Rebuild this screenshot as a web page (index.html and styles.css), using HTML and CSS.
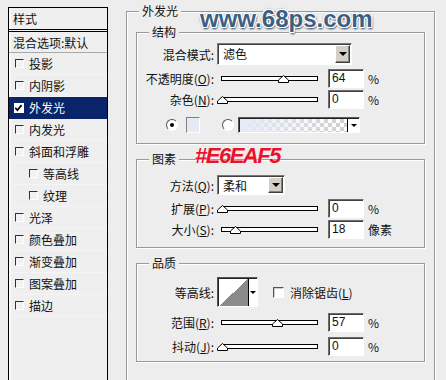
FILE: index.html
```html
<!DOCTYPE html>
<html lang="zh-CN">
<head>
  <meta charset="UTF-8" />
  <title>图层样式 - 外发光</title>
  <link rel="stylesheet" href="styles.css">
</head>
<body>
  <div class="dialog">

    <!-- 样式列表 -->
    <div class="styles-panel">
      <div class="panel-title">样式</div>
      <ul class="style-list">
        <li class="blend">混合选项:默认</li>
        <li><span class="check"></span>投影</li>
        <li><span class="check"></span>内阴影</li>
        <li class="active">
          <span class="check on">
            <svg width="9" height="9" viewBox="0 0 9 9"><polyline points="1.2,4.2 3.4,6.6 7.6,1.6" fill="none" stroke="#000" stroke-width="1.7"/></svg>
          </span>外发光
        </li>
        <li><span class="check"></span>内发光</li>
        <li><span class="check"></span>斜面和浮雕</li>
        <li class="sub"><span class="check"></span>等高线</li>
        <li class="sub"><span class="check"></span>纹理</li>
        <li><span class="check"></span>光泽</li>
        <li><span class="check"></span>颜色叠加</li>
        <li><span class="check"></span>渐变叠加</li>
        <li><span class="check"></span>图案叠加</li>
        <li><span class="check"></span>描边</li>
      </ul>
    </div>

    <!-- 外发光设置 -->
    <div class="settings">
      <div class="group group-outer">
        <span class="legend">外发光</span>

        <div class="group group-inner structure">
          <span class="legend">结构</span>
          <div class="row row-select">
            <span class="label">混合模式:</span>
            <div class="select select-wide"><span class="select-text">滤色</span><span class="select-btn"><i class="arrow"></i></span></div>
          </div>
          <div class="row row-first">
            <span class="label">不透明度(<u>O</u>):</span>
            <div class="slider"><span class="track"></span><svg class="thumb" style="left:61px" width="11" height="8" viewBox="0 0 11 8"><polygon points="0.5,7.5 0.5,5 5.5,0.5 10.5,5 10.5,7.5" fill="#fff" stroke="#000"/></svg></div>
            <span class="num">64</span><span class="unit">%</span>
          </div>
          <div class="row">
            <span class="label">杂色(<u>N</u>):</span>
            <div class="slider"><span class="track"></span><svg class="thumb" style="left:0px" width="11" height="8" viewBox="0 0 11 8"><polygon points="0.5,7.5 0.5,5 5.5,0.5 10.5,5 10.5,7.5" fill="#fff" stroke="#000"/></svg></div>
            <span class="num">0</span><span class="unit">%</span>
          </div>
          <div class="row row-color">
            <span class="radio on"></span>
            <span class="swatch"></span>
            <span class="radio radio-2"></span>
            <div class="gradient"><span class="gradient-fill"></span><span class="mini-btn"><i class="arrow"></i></span></div>
          </div>
        </div>

        <div class="group group-inner elements">
          <span class="legend">图素</span>
          <div class="row row-method">
            <span class="label">方法(<u>Q</u>):</span>
            <div class="select select-short"><span class="select-text">柔和</span><span class="select-btn"><i class="arrow"></i></span></div>
          </div>
          <div class="row row-first">
            <span class="label">扩展(<u>P</u>):</span>
            <div class="slider"><span class="track"></span><svg class="thumb" style="left:0px" width="11" height="8" viewBox="0 0 11 8"><polygon points="0.5,7.5 0.5,5 5.5,0.5 10.5,5 10.5,7.5" fill="#fff" stroke="#000"/></svg></div>
            <span class="num">0</span><span class="unit">%</span>
          </div>
          <div class="row">
            <span class="label">大小(<u>S</u>):</span>
            <div class="slider"><span class="track"></span><svg class="thumb" style="left:13px" width="11" height="8" viewBox="0 0 11 8"><polygon points="0.5,7.5 0.5,5 5.5,0.5 10.5,5 10.5,7.5" fill="#fff" stroke="#000"/></svg></div>
            <span class="num">18</span><span class="unit">像素</span>
          </div>
        </div>

        <div class="group group-inner quality">
          <span class="legend">品质</span>
          <div class="row row-contour">
            <span class="label">等高线:</span>
            <div class="contour"><span class="contour-preview"></span><span class="contour-btn"><i class="arrow"></i></span></div>
            <span class="box-check"></span>
            <span>消除锯齿(<u>L</u>)</span>
          </div>
          <div class="row row-range">
            <span class="label">范围(<u>R</u>):</span>
            <div class="slider"><span class="track"></span><svg class="thumb" style="left:55px" width="11" height="8" viewBox="0 0 11 8"><polygon points="0.5,7.5 0.5,5 5.5,0.5 10.5,5 10.5,7.5" fill="#fff" stroke="#000"/></svg></div>
            <span class="num">57</span><span class="unit">%</span>
          </div>
          <div class="row row-jitter">
            <span class="label">抖动(<u>J</u>):</span>
            <div class="slider"><span class="track"></span><svg class="thumb" style="left:0px" width="11" height="8" viewBox="0 0 11 8"><polygon points="0.5,7.5 0.5,5 5.5,0.5 10.5,5 10.5,7.5" fill="#fff" stroke="#000"/></svg></div>
            <span class="num">0</span><span class="unit">%</span>
          </div>
        </div>
      </div>
    </div>

    <!-- 水印和标注 -->
    <div class="watermark">www.68ps.com</div>
    <div class="color-note">#E6EAF5</div>
  </div>
</body>
</html>
```

FILE: styles.css
```css
* {
  box-sizing: border-box;
}

html,
body {
  margin: 0;
  height: 100%;
}

body {
  background-color: #ededed;
  font-family: "Noto Sans CJK SC", "Liberation Sans", sans-serif;
  font-size: 12px;
  color: #111;
  overflow: hidden;
}

u {
  text-decoration: underline;
  text-underline-offset: 1px;
}

.dialog {
  position: relative;
  display: flex;
  align-items: flex-start;
  height: 380px;
}

/* left list */
.styles-panel {
  margin: 7px 0 0 8px;
  width: 100px;
  height: 373px;
  border: 1px solid #000;
  border-bottom: none;
  background-color: #efefef;
  box-shadow: inset 2px 0 0 #f8f8f8;
}

.panel-title {
  height: 24px;
  line-height: 21px;
  padding-left: 4px;
  border-bottom: 3px double #000;
}

.style-list {
  list-style: none;
  margin: 0;
  padding: 0;
}

.style-list li {
  display: flex;
  align-items: center;
  height: 22px;
  padding-left: 6px;
  border-bottom: 1px solid #f5f5f5;
}

.style-list .blend {
  height: 21px;
  padding-left: 4px;
  border-bottom: 1px solid #a8a8a8;
}

.style-list .sub {
  padding-left: 20px;
}

.style-list .active {
  background-color: #0a246a;
  color: #fff;
  border-bottom-color: #0a246a;
}

.check {
  flex: none;
  display: flex;
  width: 9px;
  height: 9px;
  margin-right: 5px;
  border: 1px solid;
  border-color: #303030 #fff #fff #303030;
  background-color: #f2f2f2;
}

.check.on {
  width: 10px;
  height: 10px;
  border-color: #fff;
  background-color: #fff;
  padding: 0;
  margin-left: -1px;
}

.check.on svg {
  display: block;
  margin: -1px 0 0 -1px;
  width: 10px;
  height: 10px;
}

/* right settings */
.settings {
  margin: 11px 0 0 18px;
}

.group {
  position: relative;
  border: 1px solid #999;
  box-shadow: inset 1px 1px 0 #fff, 1px 1px 0 #fff;
}

.group-outer {
  width: 309px;
  height: 380px;
  border-bottom: none;
  padding: 20px 9px 0;
}

.group-inner {
  width: 289px;
  margin-bottom: 15px;
}

.legend {
  position: absolute;
  top: -8px;
  left: 12px;
  padding: 0 3px;
  line-height: 14px;
  background-color: #ededed;
}

.structure {
  height: 112px;
  padding-top: 10px;
}

.elements {
  height: 89px;
  padding-top: 15px;
}

.quality {
  height: 99px;
  padding-top: 13px;
}

.row {
  display: flex;
  align-items: center;
  height: 21px;
  white-space: nowrap;
}

.row-select {
  height: 22px;
}

.row-first {
  margin-top: 3px;
}

.row-method {
  height: 20px;
}

.row-contour {
  height: 30px;
}

.row-range {
  margin-top: 5px;
}

.row-jitter {
  margin-top: 3px;
}

.label {
  width: 77px;
  margin-right: 3px;
  text-align: right;
}

/* dropdowns */
.select {
  display: flex;
  height: 100%;
  background-color: #fff;
  border: 1px solid;
  border-color: #7a7a7a #fff #fff #7a7a7a;
  box-shadow: inset 1px 1px 0 #404040;
}

.select-wide {
  width: 135px;
}

.select-short {
  width: 68px;
}

.select-text {
  flex: 1;
  padding-left: 5px;
  line-height: 19px;
}

.select-btn {
  display: flex;
  align-items: center;
  justify-content: center;
  width: 15px;
  margin: 1px 1px 1px 0;
  background-color: #d4d0c8;
  border: 1px solid;
  border-color: #fff #404040 #404040 #fff;
  box-shadow: inset -1px -1px 0 #808080;
}

.arrow {
  display: block;
  width: 0;
  height: 0;
  border-left: 4px solid transparent;
  border-right: 4px solid transparent;
  border-top: 4px solid #000;
}

/* sliders */
.slider {
  position: relative;
  display: flex;
  align-items: center;
  width: 111px;
  height: 100%;
  padding-left: 4px;
}

.track {
  display: block;
  width: 97px;
  height: 5px;
  border: 1px solid #000;
  background-color: #fff;
}

.thumb {
  position: absolute;
  top: 7px;
}

.num {
  width: 36px;
  height: 19px;
  padding-left: 3px;
  line-height: 17px;
  background-color: #fff;
  border: 1px solid;
  border-color: #6d6d6d #fff #fff #6d6d6d;
  box-shadow: inset 1px 1px 0 #404040;
  font-family: "Liberation Sans", sans-serif;
}

.unit {
  margin-left: 4px;
}

/* colour row */
.row-color {
  height: 16px;
  margin-top: 7px;
  padding-left: 29px;
}

.radio {
  width: 12px;
  height: 12px;
  border-radius: 50%;
  border: 1px solid;
  border-color: #555 #fff #fff #555;
  background-color: #fff;
  display: flex;
  align-items: center;
  justify-content: center;
}

.radio.on::after {
  content: "";
  width: 4px;
  height: 4px;
  border-radius: 50%;
  background-color: #000;
}

.radio-2 {
  margin-left: 22px;
  margin-right: 4px;
}

.swatch {
  width: 14px;
  height: 16px;
  margin-left: 8px;
  border: 1px solid;
  border-color: #808080 #fff #fff #808080;
  background-color: #e6eaf5;
}

.gradient {
  display: flex;
  width: 122px;
  height: 16px;
  border: 1px solid;
  border-color: #555 #fff #fff #555;
  box-shadow: inset 1px 1px 0 #222;
}

.gradient-fill {
  flex: 1;
  margin: 1px 0 0 1px;
  background:
    linear-gradient(to right, #e6eaf5, rgba(230, 234, 245, 0)),
    repeating-conic-gradient(#d0d0d0 0 25%, #fff 0 50%) 0 0 / 8px 8px;
}

.mini-btn {
  display: flex;
  align-items: center;
  justify-content: center;
  width: 12px;
  margin-top: 1px;
  background-color: #fff;
  border-left: 1px solid #000;
}

.mini-btn .arrow,
.contour-btn .arrow {
  border-left-width: 3px;
  border-right-width: 3px;
  border-top-width: 3px;
}

/* quality */
.contour {
  display: flex;
  width: 41px;
  height: 30px;
  border: 1px solid;
  border-color: #555 #fff #fff #555;
  box-shadow: inset 1px 1px 0 #222;
}

.contour-preview {
  flex: 1;
  margin: 1px 0 0 1px;
  background: linear-gradient(to bottom right, #fff 50%, #8a8a8a 50%);
}

.contour-btn {
  display: flex;
  align-items: center;
  justify-content: center;
  width: 9px;
  margin-top: 1px;
  background-color: #fff;
  border-left: 1px solid #000;
}

.box-check {
  width: 11px;
  height: 11px;
  margin: 0 6px 0 15px;
  border: 1px solid;
  border-color: #555 #fff #fff #555;
  background-color: #fff;
  box-shadow: inset 1px 1px 0 #ccc;
}

/* overlays */
.watermark {
  position: absolute;
  left: 200px;
  top: 7px;
  font-family: "Liberation Sans", sans-serif;
  font-weight: bold;
  font-size: 24px;
  line-height: 24px;
  color: #3f5f82;
  text-shadow:
    -1px -1px 0 #fff, 1px -1px 0 #fff, -1px 1px 0 #fff, 1px 1px 0 #fff,
    0 -1px 0 #fff, 0 1px 0 #fff, -1px 0 0 #fff, 1px 0 0 #fff,
    0 0 3px #29415e, 1px 2px 2px #29415e;
}

.color-note {
  position: absolute;
  left: 195px;
  top: 145px;
  font-family: "Liberation Sans", sans-serif;
  font-weight: bold;
  font-style: italic;
  font-size: 22px;
  line-height: 22px;
  letter-spacing: -1.5px;
  color: #e8122c;
  text-shadow: 0 0 1px #fff;
}
```
